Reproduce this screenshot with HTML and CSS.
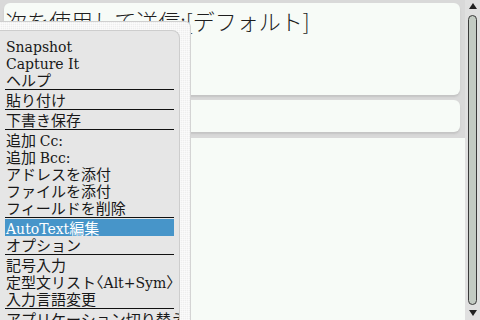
FILE: index.html
```html
<!DOCTYPE html>
<html lang="ja">
<head>
<meta charset="utf-8">
<link rel="stylesheet" href="styles.css">
</head>
<body>
<div class="screen">
  <div class="main">
    <div class="field field-from"><span class="from-text">次を使用して送信:[デフォルト]</span></div>
    <div class="field field-to"></div>
    <div class="body-area"></div>
  </div>
  <div class="scrollbar">
    <div class="arrow arrow-up"></div>
    <div class="track"></div>
    <div class="arrow arrow-down"></div>
  </div>
</div>
<div class="menu">
  <div class="menu-inner">
    <div class="item"><span class="lat">Snapshot</span></div>
    <div class="item"><span class="lat">Capture It</span></div>
    <div class="item">ヘルプ</div>
    <div class="sep"></div>
    <div class="item">貼り付け</div>
    <div class="sep"></div>
    <div class="item">下書き保存</div>
    <div class="sep"></div>
    <div class="item">追加 <span class="lat">Cc:</span></div>
    <div class="item">追加 <span class="lat">Bcc:</span></div>
    <div class="item">アドレスを添付</div>
    <div class="item">ファイルを添付</div>
    <div class="item">フィールドを削除</div>
    <div class="sep"></div>
    <div class="item selected"><span class="lat">AutoText</span>編集</div>
    <div class="item">オプション</div>
    <div class="sep"></div>
    <div class="item">記号入力</div>
    <div class="item">定型文リスト<span class="br">〈</span><span class="lat">Alt+Sym</span><span class="br">〉</span></div>
    <div class="item">入力言語変更</div>
    <div class="sep"></div>
    <div class="item">アプリケーション切り替え</div>
  </div>
</div>
</body>
</html>
```
FILE: styles.css
```css
html, body {
  margin: 0;
  padding: 0;
}
body {
  width: 480px;
  height: 320px;
  overflow: hidden;
  background: #d9d9d9;
  position: relative;
  font-family: "Noto Sans CJK JP", sans-serif;
  color: #181818;
}
.screen {
  display: flex;
  width: 480px;
  height: 320px;
}
.main {
  width: 465px;
  display: flex;
  flex-direction: column;
}
.field {
  background: #f7fbf7;
  border-radius: 6px;
  margin: 0 5px 0 4px;
  box-shadow: 0 2px 2px #c4c4c4;
}
.field-from {
  margin-top: 3px;
  height: 92px;
  box-sizing: border-box;
  padding: 3px 0 0 1px;
}
.from-text {
  font-family: "Noto Sans CJK JP", sans-serif;
  font-size: 22px;
  font-weight: 300;
  line-height: 28px;
  color: #1e1e1e;
}
.field-to {
  margin-top: 5px;
  height: 32px;
}
.body-area {
  margin-top: 6px;
  flex: 1;
  background: #f7fbf7;
  margin-left: 4px;
}
.scrollbar {
  width: 15px;
  background: #e0e0e0;
  display: flex;
  flex-direction: column;
  align-items: center;
}
.arrow {
  width: 0;
  height: 0;
  border-left: 4px solid transparent;
  border-right: 4px solid transparent;
}
.arrow-up {
  margin-top: 3px;
  border-bottom: 6px solid #222;
}
.arrow-down {
  margin: 5px 0 4px;
  border-top: 6px solid #222;
}
.track {
  margin-top: 6px;
  flex: 1;
  width: 7px;
  border: 1px solid #3a3a3a;
  border-radius: 5px;
  background: #c3cbc3;
}
.menu {
  position: absolute;
  left: 0;
  top: 21px;
  width: 191px;
  bottom: 0;
  background-color: #eeeeee;
  background-image: linear-gradient(90deg, rgba(255,255,255,0.5) 1px, transparent 1px),
                    linear-gradient(0deg, rgba(255,255,255,0.5) 1px, transparent 1px);
  background-size: 2px 2px;
  border-top: 1px solid #cfcfcf;
  border-right: 1px solid #d4d4d4;
  border-top-right-radius: 6px;
  box-sizing: border-box;
  padding-top: 8px;
}
.menu-inner {
  width: 180px;
  height: 100%;
  box-sizing: border-box;
  background: #e6e6e6;
  border-top: 1px solid #cdcdcd;
  border-right: 1px solid #cdcdcd;
  border-top-right-radius: 8px;
  padding: 6px 0 0 5px;
  overflow: hidden;
}
.item {
  width: 169px;
  height: 17px;
  line-height: 21px;
  font-family: "Liberation Serif", "Noto Sans CJK JP", serif;
  font-size: 15px;
  padding-left: 1px;
  box-sizing: border-box;
  white-space: nowrap;
}
.lat {
  font-family: "DejaVu Serif", serif;
  font-size: 14px;
  line-height: 1;
}
.br {
  font-feature-settings: "halt";
}
.item.selected {
  background: #4795c9;
  color: #ffffff;
}
.sep {
  width: 169px;
  height: 1px;
  margin: 1px 0;
  background: #111;
}
```
